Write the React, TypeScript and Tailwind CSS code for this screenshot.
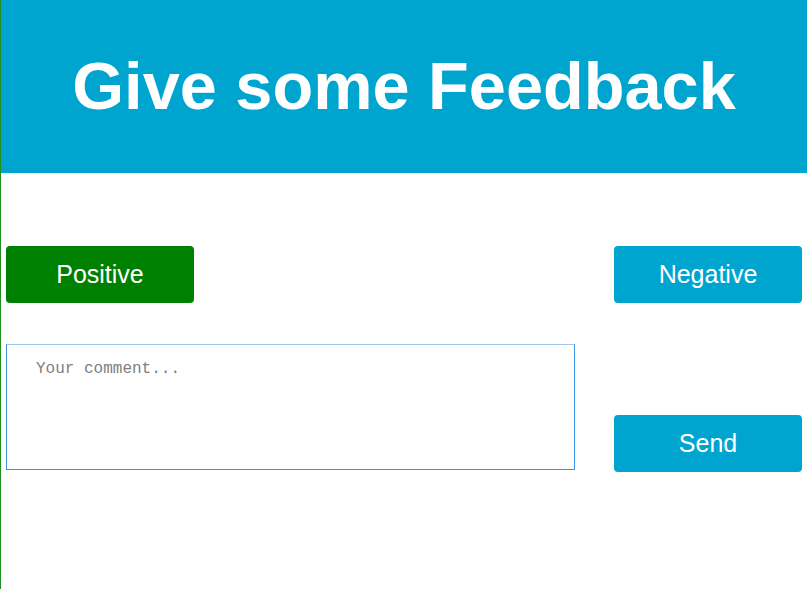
import React, { useState } from 'react';

const App: React.FC = () => {
  const [choice, setChoice] = useState<'positive' | 'negative' | null>(null);
  const [comment, setComment] = useState('');

  return (
    <div className="min-h-screen border-l border-[#1f8f1f] bg-white font-['Liberation_Sans',Arial,sans-serif]">
      <header className="h-[173px] bg-[#00a5cf] flex items-center justify-center">
        <h1 className="text-[66.7px] font-bold text-white leading-none">Give some Feedback</h1>
      </header>

      <main className="px-[5px]">
        <div className="mt-[73px] flex justify-between">
          <button
            onClick={() => setChoice('positive')}
            className="w-[188px] h-[57px] rounded bg-[#008000] text-white text-[25px]"
          >
            Positive
          </button>
          <button
            onClick={() => setChoice('negative')}
            className="w-[188px] h-[57px] rounded bg-[#00a5cf] text-white text-[25px]"
          >
            Negative
          </button>
        </div>

        <div className="mt-[41px] flex justify-between items-start">
          <textarea
            value={comment}
            onChange={(e) => setComment(e.target.value)}
            placeholder="Your comment..."
            className="w-[569px] h-[126px] resize-none border border-[#3a93e4] border-t-[#9ec8ee] px-[29px] pt-[15px] pb-[14px] font-['Liberation_Mono','Courier_New',monospace] text-[16px] leading-[18px] text-gray-800 placeholder:text-[#808080] outline-none"
          />
          <button
            onClick={() => console.log(choice, comment)}
            className="mt-[71px] w-[188px] h-[57px] rounded bg-[#00a5cf] text-white text-[25px]"
          >
            Send
          </button>
        </div>
      </main>
    </div>
  );
};

export default App;
